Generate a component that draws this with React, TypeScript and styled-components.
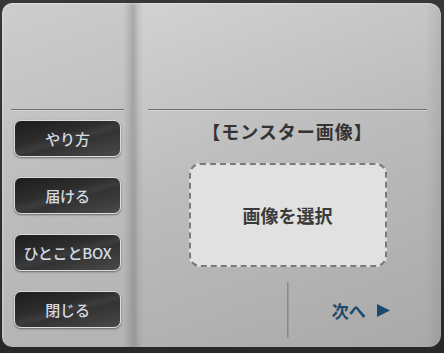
import React from "react";
import styled, { createGlobalStyle } from "styled-components";

const GlobalStyle = createGlobalStyle`
  html, body {
    margin: 0;
    padding: 0;
    background: #2e2e2e;
    font-family: "Noto Sans CJK JP", "Noto Sans", sans-serif;
  }
  * { box-sizing: border-box; }
`;

const Frame = styled.div`
  width: 444px;
  height: 353px;
  display: flex;
  padding: 3px 3px 6px 2px;
  background: linear-gradient(to bottom, #373737 0%, #2f2f2f 60%, #282828 100%);
`;

const LeftPage = styled.div`
  width: 132px;
  display: flex;
  flex-direction: column;
  padding: 106px 10px 0 9px;
  border-radius: 10px 0 0 10px;
  background:
    linear-gradient(to right, rgba(0,0,0,0) 0%, rgba(0,0,0,0) 92%, rgba(0,0,0,0.08) 96%, rgba(0,0,0,0.17) 100%),
    linear-gradient(160deg, #cdcdcd 0%, #bdbdbd 50%, #b3b3b3 100%);
  box-shadow: inset 1px 1px 2px rgba(255,255,255,0.35);
`;

const RightPage = styled.div`
  flex: 1;
  display: flex;
  flex-direction: column;
  align-items: center;
  padding: 106px 0 9px 0;
  border-radius: 0 12px 12px 0;
  background:
    linear-gradient(to right, rgba(0,0,0,0.2) 0%, rgba(0,0,0,0.07) 1.2%, rgba(0,0,0,0) 3%, rgba(0,0,0,0) 95%, rgba(0,0,0,0.08) 100%),
    linear-gradient(160deg, #d2d2d2 0%, #bcbcbc 45%, #a9a9a9 100%);
  box-shadow: inset 0 1px 2px rgba(255,255,255,0.3);
`;

const Rule = styled.div<{ $inset?: number }>`
  align-self: stretch;
  height: 1px;
  margin: 0 ${(p) => p.$inset ?? 0}px;
  background: #727272;
  box-shadow: 0 1px 0 rgba(255,255,255,0.25);
`;

const ButtonList = styled.div`
  display: flex;
  flex-direction: column;
  gap: 20px;
  margin-top: 10px;
  padding: 0 1px 0 3px;
`;

const MenuButton = styled.button`
  height: 37px;
  width: 107px;
  padding: 0;
  border: 1px solid #dcdcdc;
  border-radius: 7px;
  background: linear-gradient(165deg, #1c1c1c 0%, #2e2e2e 40%, #3c3c3c 52%, #333 60%, #4a4a4a 100%);
  box-shadow: 0 1px 2px rgba(0,0,0,0.45);
  color: #d3dbe3;
  font-family: "Noto Sans CJK JP", sans-serif;
  font-size: 15px;
  font-weight: 500;
  letter-spacing: -0.2px;
  display: flex;
  align-items: center;
  justify-content: center;
  cursor: pointer;
`;

const Title = styled.div`
  margin-top: 9px;
  font-size: 18px;
  line-height: 24px;
  font-weight: 700;
  letter-spacing: 1px;
  color: #333;
`;

const DropZone = styled.div`
  margin-top: 20px;
  width: 198px;
  height: 104px;
  border: 2px dashed #7a7a7a;
  border-radius: 11px;
  background: #e1e1e1;
  display: flex;
  align-items: center;
  justify-content: center;
  font-size: 18px;
  font-weight: 700;
  color: #3a3a3a;
`;

const BottomRow = styled.div`
  align-self: stretch;
  margin-top: 15px;
  height: 56px;
  display: grid;
  grid-template-columns: 1fr 2px 1fr;
`;

const Divider = styled.div`
  background: #8a8a8a;
  border-right: 1px solid rgba(255,255,255,0.15);
`;

const NextButton = styled.div`
  display: flex;
  align-items: center;
  justify-content: center;
  gap: 10px;
  font-size: 17px;
  font-weight: 700;
  color: #1d4a6a;
  padding-right: 8px;
`;

const Arrow = styled.svg`
  width: 14px;
  height: 13px;
  display: block;
`;

export default function App() {
  return (
    <>
      <GlobalStyle />
      <Frame>
        <LeftPage>
          <Rule />
          <ButtonList>
            <MenuButton>やり方</MenuButton>
            <MenuButton>届ける</MenuButton>
            <MenuButton>ひとことBOX</MenuButton>
            <MenuButton>閉じる</MenuButton>
          </ButtonList>
        </LeftPage>
        <RightPage>
          <Rule $inset={14} />
          <Title>【モンスター画像】</Title>
          <DropZone>画像を選択</DropZone>
          <BottomRow>
            <div />
            <Divider />
            <NextButton>
              <span>次へ</span>
              <Arrow viewBox="0 0 14 13">
                <path d="M1 0 L14 6.5 L1 13 Z" fill="#1d4a6a" />
              </Arrow>
            </NextButton>
          </BottomRow>
        </RightPage>
      </Frame>
    </>
  );
}
